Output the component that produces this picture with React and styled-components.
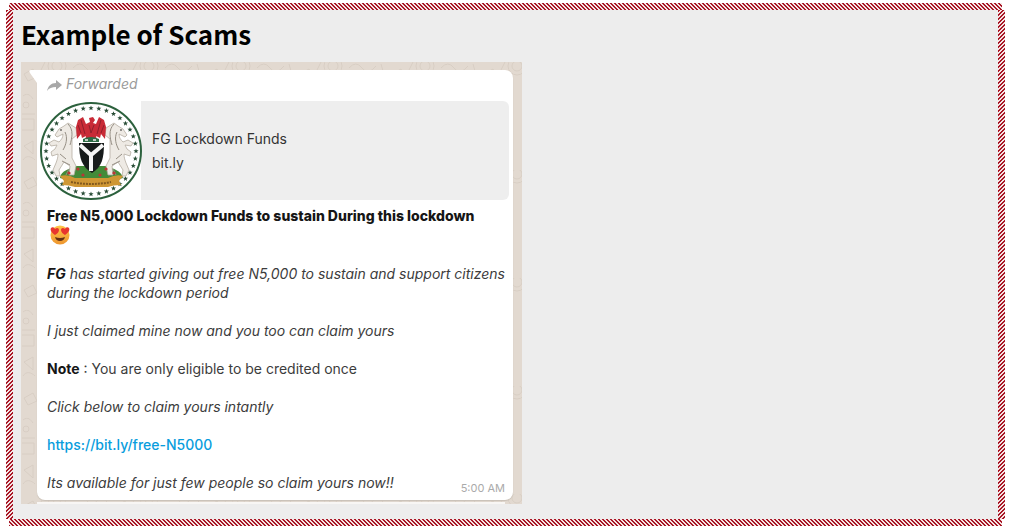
import React from 'react';
import styled, { createGlobalStyle } from 'styled-components';

const GlobalStyle = createGlobalStyle`
  * {
    box-sizing: border-box;
  }

  body {
    margin: 0;
    background: #fff;
    font-family: Inter, 'Liberation Sans', sans-serif;
  }
`;

const hatch = (angle) =>
  `linear-gradient(${angle}, #a81726 0 30%, #f5e4e4 30% 50%, #a81726 50% 80%, #f5e4e4 80%) 0 0 / 4px 4px`;

const App = () => (
  <Page>
    <GlobalStyle />
    <Edge />
    <Middle>
      <Side />
      <Content>
        <Title>Example of Scams</Title>
        <Chat>
          <Doodles />
          <Bubble>
            <Tail viewBox="0 0 8 13" aria-hidden="true">
              <path d="M8 0H2C0 0 0 1 1 3l7 10z" fill="#fff" />
            </Tail>
            <Forwarded>
              <ForwardIcon />
              Forwarded
            </Forwarded>
            <Preview href="#preview">
              <Seal />
              <PreviewText>
                <span>FG Lockdown Funds</span>
                <span>bit.ly</span>
              </PreviewText>
            </Preview>
            <Message>
              <p>
                <Headline>Free N5,000 Lockdown Funds to sustain During this lockdown</Headline>
                <Emoji />
              </p>
              <p>
                <em>
                  <b>FG</b> has started giving out free N5,000 to sustain and support citizens
                  during the lockdown period
                </em>
              </p>
              <p>
                <em>I just claimed mine now and you too can claim yours</em>
              </p>
              <p>
                <b>Note</b> : You are only eligible to be credited once
              </p>
              <p>
                <em>Click below to claim yours intantly</em>
              </p>
              <p>
                <Link href="#claim">https://bit.ly/free-N5000</Link>
              </p>
              <LastLine>
                <em>Its available for just few people so claim yours now!!</em>
                <Time>5:00 AM</Time>
              </LastLine>
            </Message>
          </Bubble>
          <NextBubble />
        </Chat>
      </Content>
      <Side />
    </Middle>
    <Edge />
  </Page>
);

const Doodles = () => (
  <DoodleSvg aria-hidden="true">
    <defs>
      <pattern id="doodles" width="92" height="108" patternUnits="userSpaceOnUse">
        <g fill="none" stroke="#d8cec4" strokeWidth="1">
          <path d="M3 12l9-5 4 8-9 4zM2 34c5-4 8 0 10 3M1 52h13M1 57h12v11H1M3 84l9-5v13zM2 98c3-5 8-4 12 0" />
          <circle cx="5" cy="43" r="3" />
          <circle cx="36" cy="4" r="9" />
          <circle cx="36" cy="4" r="5" />
          <path d="M52 6q7-8 13 0t14-2M24 0l-4 8M84 2l4 14M78 25l8 9M80 42q9 4 4 12M78 66l10-4v10zM79 87q5-6 9 0t-5 10" />
        </g>
      </pattern>
    </defs>
    <rect width="100%" height="100%" fill="url(#doodles)" />
  </DoodleSvg>
);

const ForwardIcon = () => (
  <svg width="15" height="16" viewBox="0 -4 15 16" aria-hidden="true">
    <path d="M9 1l6 5-6 5V8C5 8 2 9 0 12c1-5 4-8 9-8z" fill="#a8a8a8" />
  </svg>
);

const Horse = () => (
  <g>
    <path
      d="M28 21l-4 3-5 3-4 6 2 2 6-3c0 4-2 6-4 8l-5-2-5 3 2 3 6-1-2 4-4 3 1 4 6-2c0 4-1 6-2 9l-3 7 3 6h4l-1-6 5-8 6 4-1 9h5l2-9-4-8V37l5-4-1-7z"
      fill="#eeeae4"
      stroke="#b5ada2"
      strokeWidth=".8"
    />
    <path
      d="M28 22c6 6 4 14 2 21M25 30c3 6 1 13-2 18M20 52l6 5M22 59l8 4M29 67l-3 6"
      fill="none"
      stroke="#968f85"
      strokeWidth="1"
    />
    <path d="M20 28h2" stroke="#333" />
  </g>
);

const Seal = () => (
  <SealSvg viewBox="0 0 102 98" role="img" aria-label="Coat of arms">
    <ellipse cx="51" cy="49" rx="50" ry="48" fill="#fff" stroke="#2c613d" strokeWidth="2" />
    {Array.from({ length: 36 }, (_, i) => {
      const angle = (i * Math.PI) / 18;
      return (
        <path
          key={i}
          transform={`translate(${51 + 45 * Math.sin(angle)} ${49 - 43 * Math.cos(angle)})`}
          d="M0-2.6L.7-.8 2.6-.8 1.1.4 1.6 2.3 0 1.2-1.6 2.3-1.1.4-2.6-.8-.7-.8z"
          fill="#294d37"
        />
      );
    })}
    <path d="M20 76c1-8 10-9 16-12h31c6 3 14 4 16 12L69 80H34z" fill="#438b39" />
    <Horse />
    <g transform="translate(102 0) scale(-1 1)">
      <Horse />
    </g>
    <path
      d="M49 16l4-1 2 3-2 3 3 1 3-7 5 3 2 7-1 12-4-5-1 4-4-2 1 5H45l1-5-4 2-1-4-4 5-1-12 2-7 5-3 3 7 4-2z"
      fill="#c92b37"
    />
    <path d="M41 18l4 14M38 23l3 8M61 18l-4 14M64 23l-3 8M49 23l2 8 3-8" fill="none" stroke="#8f1f2b" />
    <path d="M43 37q8-4 16 0v3H43z" fill="#2d6b45" />
    <path d="M45 38h3M53 38h3" stroke="#eee" strokeWidth="1.5" />
    <path d="M39 41h25c0 15-2 24-12 30-10-6-13-15-13-30z" fill="#171b1b" />
    <path d="M40 43l11 10 12-10M51 52v17" fill="none" stroke="#f5f5f5" strokeWidth="4" />
    <path d="M20 74q8-2 15 2h33q8-4 15-2l-4 5 2 4q-8 0-13 2H35q-6-2-13-2l2-4z" fill="#cf9734" />
    <path d="M31 80q20 4 40 0" fill="none" stroke="#81591e" strokeWidth="2" strokeDasharray="2 1" />
    <g fill="#bc3635">
      <circle cx="29" cy="71" r="1.6" />
      <circle cx="38" cy="67" r="1.6" />
      <circle cx="43" cy="73" r="1.6" />
      <circle cx="60" cy="73" r="1.6" />
      <circle cx="66" cy="67" r="1.6" />
      <circle cx="74" cy="71" r="1.6" />
    </g>
  </SealSvg>
);

const Emoji = () => (
  <EmojiSvg viewBox="0 0 20 20" role="img" aria-label="Smiling face with heart eyes">
    <defs>
      <linearGradient id="face" x2="0" y2="1">
        <stop stopColor="#ffc64a" />
        <stop offset="1" stopColor="#ee962f" />
      </linearGradient>
    </defs>
    <circle cx="10" cy="10" r="9.5" fill="url(#face)" />
    <path
      d="M5 10C1 7 0 5 1 3c1-1 3-1 4 1 2-2 4-1 4 1 0 2-2 4-4 5zM15 10c-2-1-4-3-4-5s2-3 4-1c1-2 3-2 4-1 1 2 0 4-4 7z"
      fill="#e8352e"
    />
    <path d="M5 12q5 2 10 0-1 4-5 4t-5-4z" fill="#633014" />
  </EmojiSvg>
);

const Page = styled.div`
  padding: 3px 5px 6px 6px;
`;

const Edge = styled.div`
  height: 7px;
  margin: 0 3px;
  background: ${hatch('45deg')};
`;

const Middle = styled.div`
  display: flex;
`;

const Side = styled.div`
  width: 7px;
  background: ${hatch('135deg')};
`;

const Content = styled.main`
  flex: 1;
  min-width: 0;
  padding: 6px 8px 15px;
  background: #ededed;
`;

const Title = styled.h1`
  margin: 0 0 10px;
  color: #000;
  font: 700 26px/36px 'Noto Sans CJK SC', 'Noto Sans', sans-serif;
`;

const Chat = styled.section`
  position: relative;
  max-width: 501px;
  padding: 8px 9px 0 16px;
  background: #e2d9d0;
`;

const DoodleSvg = styled.svg`
  position: absolute;
  inset: 0;
  width: 100%;
  height: 100%;
`;

const Bubble = styled.article`
  position: relative;
  padding: 3px 4px 8px 3px;
  background: #fff;
  border-radius: 0 8px 8px 8px;
  box-shadow: 0 1px 1px #c9c0b7;
`;

const Tail = styled.svg`
  position: absolute;
  top: 0;
  left: -8px;
  width: 8px;
  height: 13px;
`;

const Forwarded = styled.div`
  display: flex;
  align-items: center;
  gap: 4px;
  height: 20px;
  margin: 0 0 8px 7px;
  color: #9b9b9b;
  font-size: 14px;
  font-style: italic;
`;

const Preview = styled.a`
  display: flex;
  align-items: center;
  height: 99px;
  border-radius: 6px;
  color: #333;
  background: linear-gradient(90deg, #fff 101px, #eee 101px);
  text-decoration: none;
`;

const SealSvg = styled.svg`
  flex: none;
  width: 102px;
  height: 98px;
`;

const PreviewText = styled.div`
  display: flex;
  flex-direction: column;
  gap: 4px;
  padding-left: 10px;
  font-size: 14px;
  line-height: 20px;
`;

const Message = styled.div`
  padding: 6px 0 0 7px;
  color: #3c3c3c;
  font-size: 14px;
  line-height: 19px;

  p {
    margin: 0 0 19px;
  }

  b {
    color: #161616;
    font-weight: 700;
  }
`;

const Headline = styled.strong`
  color: #161616;
  font-weight: 800;
`;

const EmojiSvg = styled.svg`
  display: block;
  width: 20px;
  height: 20px;
  margin-left: 3px;
`;

const Link = styled.a`
  color: #099ddd;
  font-weight: 500;
  text-decoration: none;
`;

const LastLine = styled.div`
  display: flex;
  align-items: flex-end;
  justify-content: space-between;
`;

const Time = styled.time`
  padding-right: 4px;
  color: #aaa;
  font-size: 11px;
  line-height: 8px;
`;

const NextBubble = styled.div`
  position: relative;
  height: 2px;
  margin: 2px 8px 0 0;
  background: #f8f6f4;
`;

export default App;
